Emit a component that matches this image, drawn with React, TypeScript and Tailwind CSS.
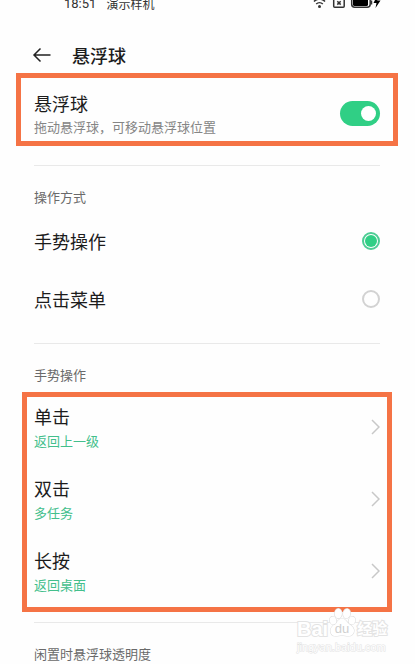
import { useState } from "react";

const modes = ["手势操作", "点击菜单"];

const gestures = [
  { name: "单击", action: "返回上一级" },
  { name: "双击", action: "多任务" },
  { name: "长按", action: "返回桌面" },
];

const StatusBar = () => (
  <div className="flex h-2.5 items-end justify-between overflow-hidden pl-16 pr-[34px] text-[#333]">
    <div className="flex items-end gap-2.5 text-xs leading-3">
      <span className="text-[13px] leading-3 font-['Roboto','Noto_Sans_CJK_SC',sans-serif]">
        18:51
      </span>
      <span>演示样机</span>
    </div>
    <svg width="68" height="14" viewBox="0 0 68 14" className="mb-px shrink-0">
      <g fill="none" stroke="#333" strokeWidth="1.5">
        <path d="M1 6.5a7.5 7.5 0 0 1 11 0M3.200 9a4.700 4.700 0 0 1 6.600 0" />
        <rect x="20.700" y="2" width="10.500" height="10.200" rx="1" />
        <path d="m24.300 6.200 3.400 3.400m0-3.400-3.400 3.400" />
        <rect x="38.700" y="2" width="18.500" height="10.200" rx="3" />
      </g>
      <circle cx="6.500" cy="11.500" r="1.500" fill="#333" />
      <rect x="40" y="2" width="15" height="9" rx="1.500" fill="#000" />
      <path d="M58.500 5.500v4" stroke="#333" strokeWidth="1.500" />
      <path d="M64.500 0 60.500 8h3l-1 5 5-7.500h-3.200z" fill="#000" />
    </svg>
  </div>
);

const Divider = () => <hr className="ml-[34px] mr-[35px] border-t border-[#e9e9e9]" />;

const SectionLabel = ({ children }: { children: string }) => (
  <h2 className="mt-[21px] px-[34px] text-[13px] leading-5 text-[#6a6a6a]">{children}</h2>
);

const Watermark = () => (
  <div className="pointer-events-none absolute right-7 top-[610px] flex w-[90px] flex-col font-['Liberation_Sans','Noto_Sans_CJK_SC',sans-serif] text-white">
    <div className="flex h-[31px] items-end gap-px whitespace-nowrap font-bold [paint-order:stroke] [-webkit-text-stroke:2px_#e3e3e3]">
      <span className="text-[20px] leading-6">Bai</span>
      <svg width="27" height="29" viewBox="0 0 27 29" className="mb-1 shrink-0">
        <g fill="#fff" stroke="#dedede" strokeWidth="1.200">
          <path d="M13 10.500c3 0 4 2.500 6 4.500s6 4 6 7.500-2.500 5.500-5.500 5.500c-2.500 0-4-.8-6.500-.8s-4 .8-6.500.8C3.500 28 1.500 26 1.500 22.500S5 17 7 15s3-4.500 6-4.500z" />
          <ellipse cx="4" cy="12.500" rx="3.200" ry="4" transform="rotate(-15 4 12.500)" />
          <ellipse cx="9.300" cy="5.500" rx="3.600" ry="4.800" />
          <ellipse cx="17.700" cy="5.500" rx="3.600" ry="4.800" transform="rotate(10 17.700 5.500)" />
          <ellipse cx="23" cy="12.500" rx="3.200" ry="4" transform="rotate(15 23 12.500)" />
        </g>
        <text
          x="13"
          y="25"
          textAnchor="middle"
          fontSize="13"
          fontWeight="400"
          fill="#cfcfcf"
          className="[-webkit-text-stroke:0px]"
        >
          du
        </text>
      </svg>
      <span className="text-[15px] leading-6">经验</span>
    </div>
    <span className="text-[11px] leading-3 [paint-order:stroke] [-webkit-text-stroke:1px_#e2e2e2]">
      jingyan.baidu.com
    </span>
  </div>
);

const App = () => {
  const [enabled, setEnabled] = useState(true);
  const [mode, setMode] = useState(modes[0]);

  return (
    <div
      lang="zh-CN"
      className="relative bg-[#fefefe] font-['Noto_Sans_CJK_SC',sans-serif] text-[#1c1c1c]"
    >
      <StatusBar />

      {/* Title bar */}
      <header className="mb-1.5 mt-[33px] flex items-center gap-[21px] px-8">
        <button type="button" aria-label="返回" className="cursor-pointer">
          <svg width="19" height="16" viewBox="0 0 19 16" fill="none" stroke="#222" strokeWidth="1.500">
            <path d="M18.500 8H2M8.500 1.500 2 8l6.500 6.500" />
          </svg>
        </button>
        <h1 className="text-lg font-medium leading-6">悬浮球</h1>
      </header>

      {/* Main switch */}
      <label className="ml-4 mr-[17px] flex cursor-pointer items-center justify-between border-5 border-[#f57345] pb-[5px] pl-[13px] pr-[13px] pt-[13px]">
        <span className="flex flex-col gap-[3px]">
          <span className="text-lg leading-6">悬浮球</span>
          <span className="text-[13px] leading-[18px] text-[#858585]">
            拖动悬浮球，可移动悬浮球位置
          </span>
        </span>
        <input
          type="checkbox"
          role="switch"
          checked={enabled}
          onChange={(e) => setEnabled(e.target.checked)}
          className="flex h-[25px] w-10 shrink-0 cursor-pointer appearance-none items-center rounded-full bg-gray-300 px-1 before:size-[15px] before:rounded-full before:bg-white checked:justify-end checked:bg-[#30cf85]"
        />
      </label>

      <div className="mt-[19px]">
        <Divider />
      </div>

      <SectionLabel>操作方式</SectionLabel>
      <div className="mb-[15px] mt-[5px] pl-[34px] pr-[35px]">
        {modes.map((item) => (
          <label key={item} className="flex h-[58px] cursor-pointer items-center justify-between">
            <span className="text-lg leading-6">{item}</span>
            <input
              type="radio"
              name="mode"
              checked={mode === item}
              onChange={() => setMode(item)}
              className="flex size-[18px] cursor-pointer appearance-none items-center justify-center rounded-full border-2 border-[#d2d2d2] checked:border-[#4dcc94] checked:before:size-3 checked:before:rounded-full checked:before:bg-[#30cf85]"
            />
          </label>
        ))}
      </div>
      <Divider />

      {/* Gesture list */}
      <SectionLabel>手势操作</SectionLabel>
      <div className="ml-[22px] mr-[23px] mt-[7px] flex flex-col gap-[26px] border-5 border-[#f57345] pb-[13px] pl-[7px] pr-[7px] pt-[7px]">
        {gestures.map((item) => (
          <button
            key={item.name}
            type="button"
            className="flex cursor-pointer items-center justify-between text-left"
          >
            <span className="flex flex-col gap-1">
              <span className="text-lg leading-6">{item.name}</span>
              <span className="text-[13px] leading-[18px] text-[#43bf8c]">{item.action}</span>
            </span>
            <svg width="9" height="16" viewBox="0 0 9 16" fill="none" stroke="#c8c8c8" strokeWidth="1.500">
              <path d="M1 1l7 7-7 7" />
            </svg>
          </button>
        ))}
      </div>

      <div className="mt-2.5">
        <Divider />
      </div>
      <SectionLabel>闲置时悬浮球透明度</SectionLabel>

      <Watermark />
    </div>
  );
};

export default App;
